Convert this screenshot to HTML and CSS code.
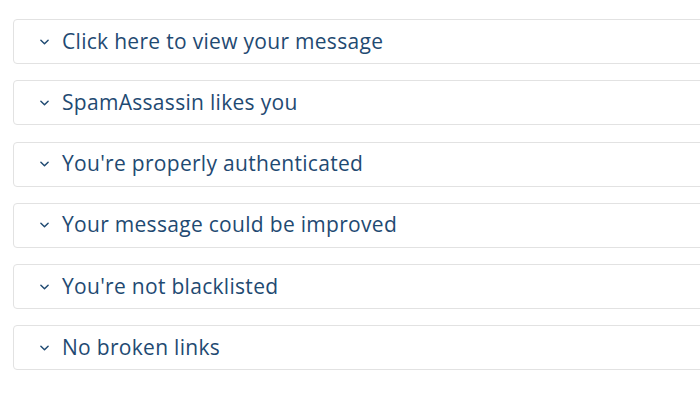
FILE: index.html
```html
<!DOCTYPE html>
<html>
<head>
<meta charset="utf-8">
<link rel="stylesheet" href="styles.css">
</head>
<body>
<div class="list">
  <div class="card"><svg class="chev" viewBox="0 0 10 6"><path d="M1 1l4 4 4-4"/></svg><span>Click here to view your message</span></div>
  <div class="card"><svg class="chev" viewBox="0 0 10 6"><path d="M1 1l4 4 4-4"/></svg><span>SpamAssassin likes you</span></div>
  <div class="card"><svg class="chev" viewBox="0 0 10 6"><path d="M1 1l4 4 4-4"/></svg><span>You're properly authenticated</span></div>
  <div class="card"><svg class="chev" viewBox="0 0 10 6"><path d="M1 1l4 4 4-4"/></svg><span>Your message could be improved</span></div>
  <div class="card"><svg class="chev" viewBox="0 0 10 6"><path d="M1 1l4 4 4-4"/></svg><span>You're not blacklisted</span></div>
  <div class="card"><svg class="chev" viewBox="0 0 10 6"><path d="M1 1l4 4 4-4"/></svg><span>No broken links</span></div>
</div>
</body>
</html>
```
FILE: styles.css
```css
html, body { margin: 0; padding: 0; background: #fff; }
body { overflow: hidden; width: 700px; height: 400px; }
.list {
  padding: 19px 0 0 13px;
  display: flex;
  flex-direction: column;
  gap: 16.25px;
  width: 720px;
}
.card {
  box-sizing: border-box;
  height: 45px;
  border: 1px solid #e2e2e2;
  border-radius: 4px;
  display: flex;
  align-items: center;
  padding-left: 26px;
  font-family: "Open Sans", "Noto Sans", sans-serif;
  font-size: 21px;
  color: #1f4a72;
  letter-spacing: 0.3px;
}
.chev {
  width: 9px;
  height: 6px;
  margin-right: 13px;
  fill: none;
  stroke: #1f4a72;
  stroke-width: 1.6;
  stroke-linecap: round;
  stroke-linejoin: round;
}
.card span { line-height: 1; padding-bottom: 1px; }
```
